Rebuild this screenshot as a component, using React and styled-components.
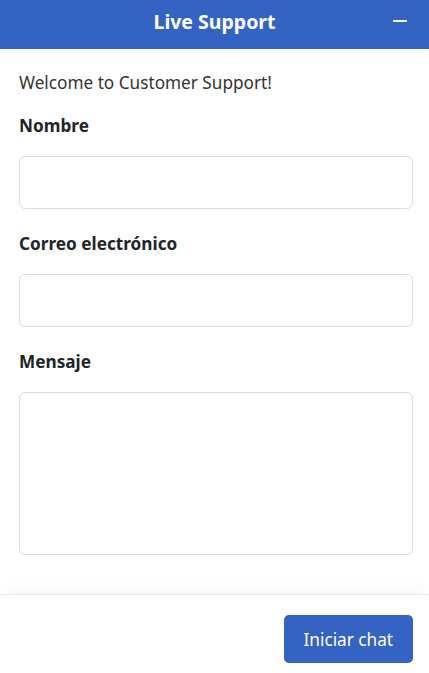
import React, { useState } from 'react';
import styled, { createGlobalStyle } from 'styled-components';

const GlobalStyle = createGlobalStyle`
  * { box-sizing: border-box; }
  html, body { margin: 0; padding: 0; height: 100%; }
  body {
    font-family: "Noto Sans", "Open Sans", sans-serif;
    color: #212529;
    background: #fff;
  }
  #root { height: 100%; }
`;

const Widget = styled.div`
  height: 100vh;
  display: flex;
  flex-direction: column;
  background: #fff;
`;

const Header = styled.div`
  position: relative;
  height: 49px;
  flex-shrink: 0;
  background: #3563c4;
  color: #fff;
  display: flex;
  align-items: center;
  justify-content: center;
  box-shadow: 0 2px 6px rgba(0, 0, 0, 0.04);
`;

const Title = styled.h1`
  margin: 0;
  font-size: 19.5px;
  font-weight: 700;
  line-height: 1;
  padding-bottom: 6px;
`;

const MinButton = styled.button`
  position: absolute;
  right: 15px;
  top: 10px;
  width: 28px;
  height: 22px;
  padding: 0;
  border: 0;
  background: transparent;
  display: flex;
  align-items: center;
  justify-content: center;
  cursor: pointer;
`;

const Body = styled.div`
  flex: 1;
  overflow: auto;
  padding: 22px 16px 20px 19px;
`;

const Welcome = styled.p`
  margin: 0 0 19px;
  font-size: 17.2px;
  line-height: 24px;
  color: #333;
`;

const Field = styled.div`
  margin-bottom: 23px;
`;

const Label = styled.label`
  display: block;
  font-size: 17.2px;
  font-weight: 700;
  line-height: 24px;
  margin-bottom: 18px;
  color: #212529;
`;

const Input = styled.input`
  display: block;
  width: 100%;
  height: 53px;
  border: 1px solid #dcdcdc;
  border-radius: 6px;
  padding: 6px 12px;
  font: inherit;
  font-size: 16px;
  outline: none;
`;

const TextArea = styled.textarea`
  display: block;
  width: 100%;
  height: 163px;
  border: 1px solid #dcdcdc;
  border-radius: 6px;
  padding: 6px 12px;
  font: inherit;
  font-size: 16px;
  resize: none;
  outline: none;
`;

const Footer = styled.div`
  flex-shrink: 0;
  border-top: 1px solid #e6e6e6;
  padding: 20px 16px 10px;
  display: flex;
  justify-content: flex-end;
  box-shadow: 0 -8px 14px rgba(0, 0, 0, 0.025);
`;

const SendButton = styled.button`
  height: 48px;
  padding: 0 20px;
  border: 0;
  border-radius: 5px;
  background: #3563c4;
  color: #fff;
  font-family: inherit;
  font-size: 17.2px;
  cursor: pointer;
`;

function MinusIcon() {
  return (
    <svg width="16" height="4" viewBox="0 0 16 4">
      <rect x="1" y="1" width="14" height="2" fill="#fff" />
    </svg>
  );
}

export default function App() {
  let [nombre, nombre변경] = useState('');
  let [correo, correo변경] = useState('');
  let [mensaje, mensaje변경] = useState('');

  return (
    <Widget>
      <GlobalStyle />
      <Header>
        <Title>Live Support</Title>
        <MinButton aria-label="Minimizar">
          <MinusIcon />
        </MinButton>
      </Header>
      <Body>
        <Welcome>Welcome to Customer Support!</Welcome>
        <Field>
          <Label htmlFor="nombre">Nombre</Label>
          <Input id="nombre" value={nombre} onChange={e => nombre변경(e.target.value)} />
        </Field>
        <Field>
          <Label htmlFor="correo">Correo electrónico</Label>
          <Input id="correo" type="email" value={correo} onChange={e => correo변경(e.target.value)} />
        </Field>
        <Field>
          <Label htmlFor="mensaje">Mensaje</Label>
          <TextArea id="mensaje" value={mensaje} onChange={e => mensaje변경(e.target.value)} />
        </Field>
      </Body>
      <Footer>
        <SendButton>Iniciar chat</SendButton>
      </Footer>
    </Widget>
  );
}
